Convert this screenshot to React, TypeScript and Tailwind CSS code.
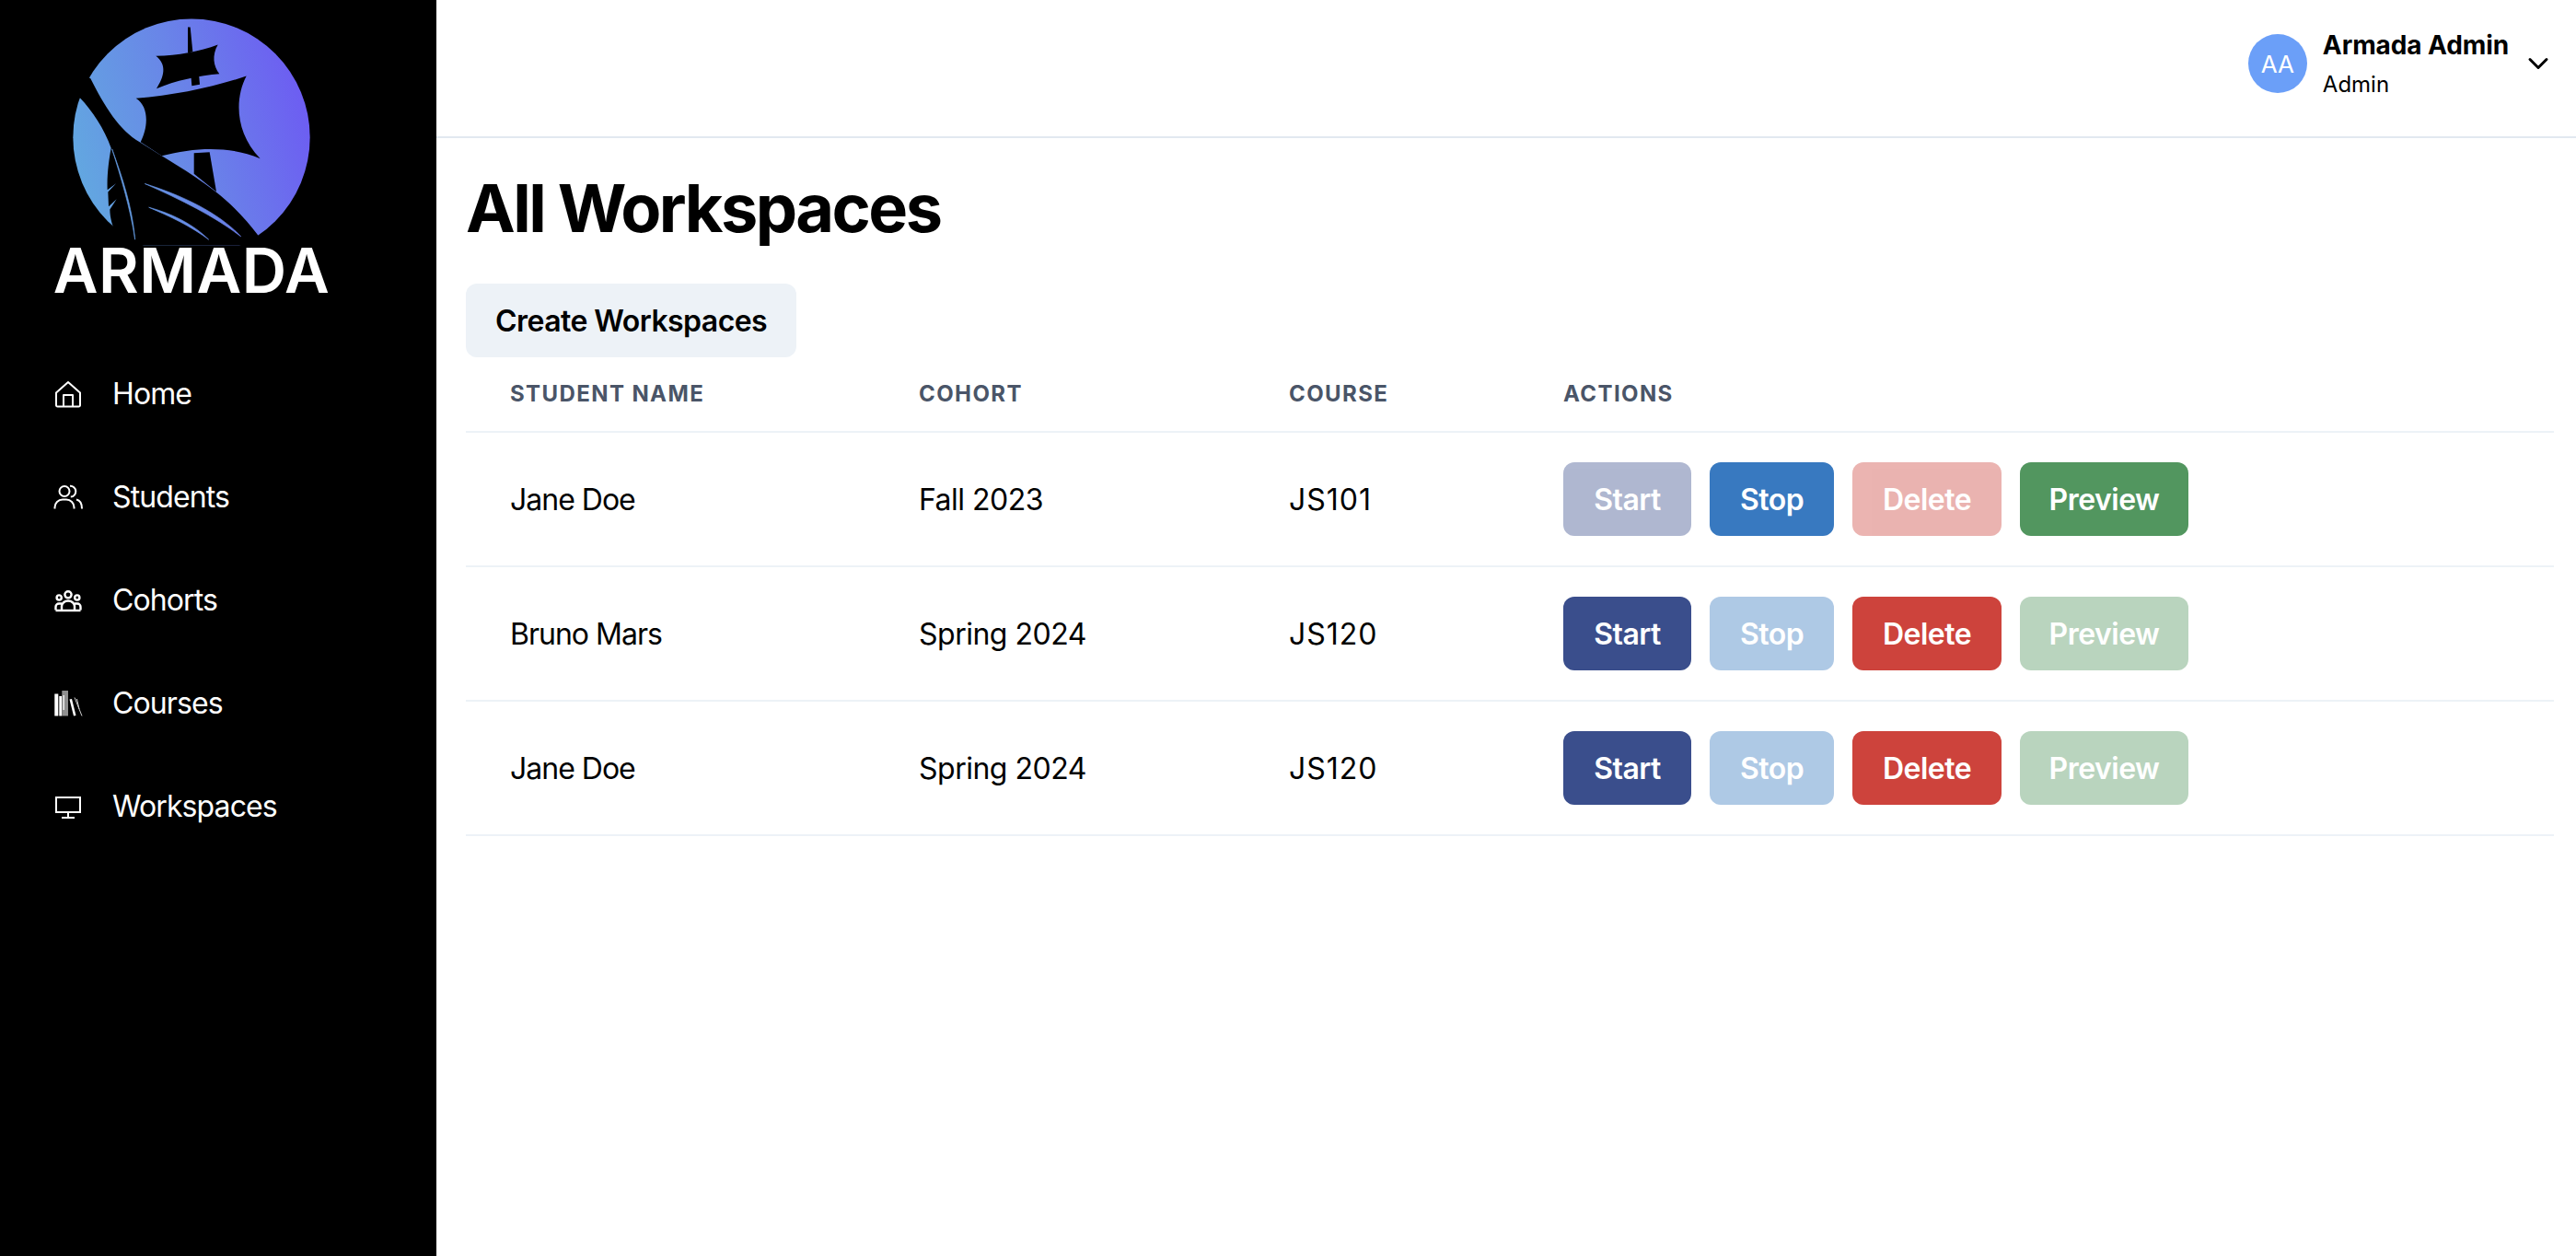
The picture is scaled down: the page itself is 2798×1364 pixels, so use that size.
import { ChevronDown } from "lucide-react";

const Logo = () => (
  <svg viewBox="0 0 1440 800" className="block w-[480px] h-[267px]">
    <defs>
      <linearGradient id="armada" gradientUnits="userSpaceOnUse" x1="238" y1="560" x2="1010" y2="340">
        <stop offset="0" stopColor="#62a8e0" />
        <stop offset="0.5" stopColor="#6985e8" />
        <stop offset="1" stopColor="#6d5cf2" />
      </linearGradient>
    </defs>
    <circle cx="624" cy="447" r="386" fill="url(#armada)" />
    {/* hull and the black cut through the circle */}
    <path
      d="M200 200 L295 255 C340 345 390 425 455 462 C530 510 620 560 700 622 C760 668 810 725 850 778 L850 800 L380 800 L385 775 C368 745 358 710 358 682 L380 648 L354 672 L352 625 L378 597 L350 618 C348 570 355 520 362 482 C340 420 300 360 262 320 L200 280 Z"
      fill="#000"
    />
    <path d="M365 485 C400 580 432 680 440 780 C425 680 395 580 365 485 Z" fill="url(#armada)" stroke="url(#armada)" strokeWidth="2" />
    <path d="M472 598 C590 635 710 690 785 770 C700 705 590 650 472 598 Z" fill="url(#armada)" stroke="url(#armada)" strokeWidth="2" />
    <path d="M485 675 C560 695 630 730 680 780 C620 735 555 705 485 675 Z" fill="url(#armada)" stroke="url(#armada)" strokeWidth="2" />
    {/* sails and mast */}
    <path d="M612 88 L620 88 L628 168 L612 172 Z" fill="#000" />
    <path d="M508 182 C580 180 650 168 710 145 C690 180 695 215 715 240 C650 245 570 262 510 288 C535 250 545 210 508 182 Z" fill="#000" />
    <path d="M622 245 L648 240 L651 275 L625 279 Z" fill="#000" />
    <path d="M443 320 C570 310 700 282 803 247 C765 320 765 430 848 516 C750 475 640 478 527 507 L458 462 C480 420 490 350 443 320 Z" fill="#000" />
    <path d="M632 498 L683 495 L705 624 L632 566 Z" fill="#000" />
  </svg>
);

const HomeIcon = () => (
  <svg viewBox="0 0 32 32" className="w-8 h-8 shrink-0" fill="none" stroke="currentColor" strokeWidth="2" strokeLinejoin="round">
    <path d="M3 14.5 L16 3 L29 14.5 V28 A1.5 1.5 0 0 1 27.5 29.5 H4.5 A1.5 1.5 0 0 1 3 28 Z" />
    <path d="M11 29.5 V17 H21 V29.5" />
  </svg>
);

const StudentsIcon = () => (
  <svg viewBox="0 0 32 32" className="w-8 h-8 shrink-0" fill="none" stroke="currentColor" strokeWidth="2">
    <circle cx="12" cy="9.5" r="5.5" />
    <path d="M1.5 28.5 V27 A8.5 8.5 0 0 1 10 18.5 H14 A8.5 8.5 0 0 1 22.5 27 V28.5" />
    <path d="M18 3.8 A5.8 5.8 0 0 1 18.8 15.6" />
    <path d="M25 18.6 C29 19.5 31 23.5 31 28.5" />
  </svg>
);

const CohortsIcon = () => (
  <svg viewBox="0 0 32 32" className="w-8 h-8 shrink-0" fill="none" stroke="currentColor" strokeWidth="2.4">
    <circle cx="16" cy="9.8" r="3.6" />
    <circle cx="6.2" cy="13" r="2.6" />
    <circle cx="25.8" cy="13" r="2.6" />
    <path d="M2.5 26.5 V23 A3.5 3.5 0 0 1 6 19.5 H9 M23 19.5 H26 A3.5 3.5 0 0 1 29.5 23 V26.5" />
    <path d="M2.5 27 H29.5" />
    <path d="M9 26.5 V22.5 A7 6 0 0 1 23 22.5 V26.5" />
  </svg>
);

const CoursesIcon = () => (
  <svg viewBox="0 0 32 32" className="w-8 h-8 shrink-0" fill="none">
    <rect x="1.3" y="5.5" width="4" height="24" fill="#fff" />
    <rect x="6.3" y="8" width="3" height="21.5" fill="#fff" />
    <rect x="9.3" y="2" width="6.7" height="27.5" fill="#8f8f8f" />
    <rect x="10.5" y="7" width="1.3" height="16" fill="#fff" />
    <path d="M17.5 11.5 L20 11 L24.5 29 L22 29.5 Z" fill="#fff" />
    <path d="M23 9.5 L31 29.5 M25.5 11 L28 22" stroke="#cfcfcf" strokeWidth="1" />
  </svg>
);

const WorkspacesIcon = () => (
  <svg viewBox="0 0 32 32" className="w-8 h-8 shrink-0" fill="none" stroke="currentColor" strokeWidth="2">
    <rect x="3" y="6" width="26" height="16" />
    <path d="M16 22 V28 M9 28 H23" />
  </svg>
);

const navItems = [
  { label: "Home", icon: <HomeIcon /> },
  { label: "Students", icon: <StudentsIcon /> },
  { label: "Cohorts", icon: <CohortsIcon /> },
  { label: "Courses", icon: <CoursesIcon /> },
  { label: "Workspaces", icon: <WorkspacesIcon /> },
];

const rows = [
  { name: "Jane Doe", cohort: "Fall 2023", course: "JS101", running: true },
  { name: "Bruno Mars", cohort: "Spring 2024", course: "JS120", running: false },
  { name: "Jane Doe", cohort: "Spring 2024", course: "JS120", running: false },
];

const ActionButton = ({ label, style, off }: { label: string; style: string; off: boolean }) => (
  <button className={`h-20 pt-[2px] rounded-xl text-[32px] font-semibold tracking-[-0.5px] text-white ${style} ${off ? "opacity-40" : ""}`}>
    {label}
  </button>
);

const App = () => {
  return (
    <div className="flex h-[1364px] bg-white text-black overflow-hidden font-['Inter',sans-serif]">
      <aside className="w-[474px] shrink-0 bg-black text-white">
        <Logo />
        <div className="w-[416px] text-center text-[67px] leading-[54px] font-semibold tracking-[0.5px]">ARMADA</div>
        <nav className="mt-[75px] flex flex-col gap-[48px] pl-[58px]">
          {navItems.map(item => (
            <div key={item.label} className="flex items-center gap-[32px] h-16 text-[32px] tracking-[-0.9px]">
              {item.icon}
              <span>{item.label}</span>
            </div>
          ))}
        </nav>
      </aside>

      <main className="flex-1 min-w-0">
        <header className="h-[150px] border-b-2 border-[#e2e8f0] flex items-center justify-end pr-[23px] pb-[10px]">
          <div className="w-16 h-16 rounded-full bg-[#6b9ff8] text-white text-[26px] flex items-center justify-center">AA</div>
          <div className="ml-[17px] flex flex-col">
            <span className="text-[28px] leading-[40px] font-bold tracking-[-0.1px]">Armada Admin</span>
            <span className="mt-[5px] text-[24px] leading-[36px]">Admin</span>
          </div>
          <ChevronDown size={36} strokeWidth={2} className="ml-[14px]" />
        </header>

        <div className="pl-8 pr-6">
          <h1 className="mt-[33px] mb-[39px] text-[72px] leading-[86px] font-bold tracking-[-2.55px]">All Workspaces</h1>
          <button className="h-20 px-8 pt-[2px] rounded-xl bg-[#edf2f7] text-[32px] font-semibold tracking-[-0.55px]">Create Workspaces</button>

          <table className="w-full table-fixed border-collapse">
            <colgroup>
              <col className="w-[444px]" />
              <col className="w-[402px]" />
              <col className="w-[298px]" />
              <col />
            </colgroup>
            <thead>
              <tr className="h-[81px] border-b-2 border-[#edf2f7] text-left text-[24px] font-bold tracking-[1.4px] text-[#4a5568]">
                <th className="pl-12 font-bold">STUDENT NAME</th>
                <th className="pl-12 font-bold">COHORT</th>
                <th className="pl-12 font-bold">COURSE</th>
                <th className="pl-12 font-bold">ACTIONS</th>
              </tr>
            </thead>
            <tbody className="text-[32px]">
              {rows.map((row, i) => (
                <tr key={i} className="h-[146px] border-b-2 border-[#edf2f7]">
                  <td className="pl-12 pt-[2px] tracking-[-1px]">{row.name}</td>
                  <td className="pl-12 pt-[2px] tracking-[-0.5px]">{row.cohort}</td>
                  <td className="pl-12 pt-[2px] tracking-[1px]">{row.course}</td>
                  <td className="pl-12">
                    <div className="flex gap-5">
                      <ActionButton label="Start" style="w-[139px] bg-[#3a4e8c]" off={row.running} />
                      <ActionButton label="Stop" style="w-[135px] bg-[#3879c0]" off={!row.running} />
                      <ActionButton label="Delete" style="w-[162px] bg-[#cd433c]" off={row.running} />
                      <ActionButton label="Preview" style="w-[183px] bg-[#52965f]" off={!row.running} />
                    </div>
                  </td>
                </tr>
              ))}
            </tbody>
          </table>
        </div>
      </main>
    </div>
  );
};

export default App;
